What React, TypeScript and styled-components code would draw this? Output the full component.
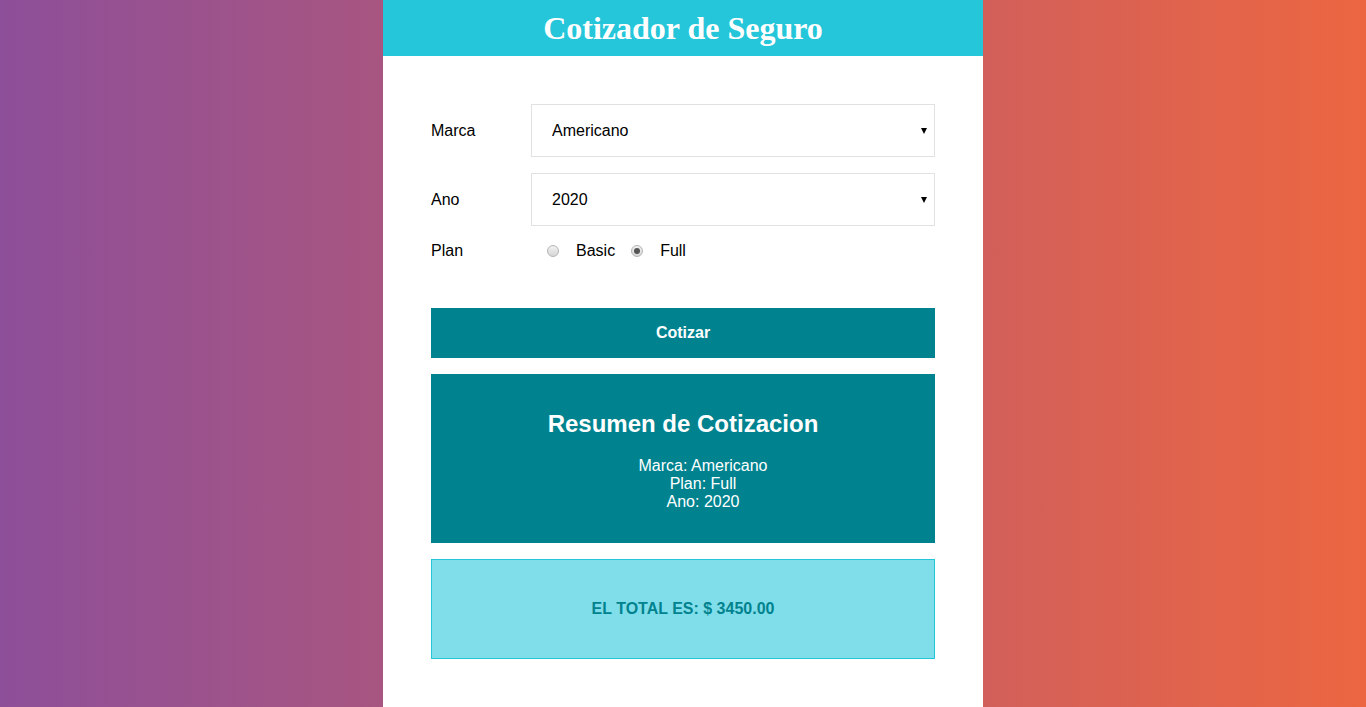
import React, { useState } from "react";
import styled, { createGlobalStyle } from "styled-components";

const GlobalStyle = createGlobalStyle`
  html, body { margin: 0; padding: 0; }
  body {
    min-height: 100vh;
    background: linear-gradient(to right, #8d4f99, #ec6641);
    font-family: "Liberation Sans", Arial, sans-serif;
    color: #000;
  }
  * { box-sizing: border-box; }
`;

const Container = styled.div`
  width: 600px;
  margin: 0 auto;
  background: #fff;
  min-height: 100vh;
`;

const Header = styled.header`
  height: 56px;
  background: #26c6da;
  display: flex;
  align-items: center;
  justify-content: center;
`;

const Title = styled.h1`
  margin: 0;
  font-family: "Liberation Serif", "Times New Roman", serif;
  font-weight: bold;
  font-size: 32px;
  color: #fff;
`;

const Body = styled.div`
  padding: 48px;
`;

const Field = styled.div`
  display: flex;
  align-items: center;
  margin-bottom: 16px;
  font-size: 16px;
`;

const Label = styled.label`
  flex: 0 0 100px;
`;

const SelectWrap = styled.div`
  position: relative;
  flex: 1;
`;

const Select = styled.select`
  display: block;
  width: 100%;
  height: 53px;
  padding: 0 20px;
  border: 1px solid #e1e1e1;
  background: #fff;
  font-family: "Liberation Sans", Arial, sans-serif;
  font-size: 16px;
  color: #000;
  appearance: none;
  -webkit-appearance: none;
  border-radius: 0;
  outline: none;
`;

const Arrow = styled.span`
  position: absolute;
  right: 8px;
  top: 24px;
  width: 0;
  height: 0;
  border-left: 3px solid transparent;
  border-right: 3px solid transparent;
  border-top: 6px solid #000;
  pointer-events: none;
`;

const Radio = styled.input`
  appearance: none;
  -webkit-appearance: none;
  width: 12px;
  height: 12px;
  margin: 0 17px 0 16px;
  border-radius: 50%;
  border: 1px solid #b5b5b5;
  background: linear-gradient(#f2f2f2, #d6d6d6);
  position: relative;
  flex: none;
  &:checked::after {
    content: "";
    position: absolute;
    left: 2px;
    top: 2px;
    width: 6px;
    height: 6px;
    border-radius: 50%;
    background: #555;
  }
`;

const OptionText = styled.span``;

const Button = styled.button`
  display: block;
  width: 100%;
  height: 50px;
  margin-top: 48px;
  border: none;
  background: #00838f;
  color: #fff;
  font-family: "Liberation Sans", Arial, sans-serif;
  font-weight: bold;
  font-size: 16px;
  cursor: pointer;
`;

const Summary = styled.div`
  margin-top: 16px;
  background: #00838f;
  color: #fff;
  text-align: center;
  padding: 16px 16px 16px;
`;

const SummaryTitle = styled.h2`
  font-size: 24px;
  margin: 20px 0 19px;
`;

const List = styled.ul`
  list-style: none;
  margin: 0 0 16px;
  padding: 0 0 0 40px;
  font-size: 16px;
  line-height: 18px;
`;

const Total = styled.div`
  margin-top: 16px;
  height: 100px;
  background: #80deea;
  border: 1px solid #26c6da;
  display: flex;
  align-items: center;
  justify-content: center;
`;

const TotalText = styled.p`
  margin: 0;
  color: #00838f;
  font-weight: bold;
  font-size: 16px;
`;

export default function App() {
  const [marca, setMarca] = useState("americano");
  const [year, setYear] = useState("2020");
  const [plan, setPlan] = useState("completo");

  return (
    <>
      <GlobalStyle />
      <Container>
        <Header>
          <Title>Cotizador de Seguro</Title>
        </Header>
        <Body>
          <Field>
            <Label>Marca</Label>
            <SelectWrap>
              <Select value={marca} onChange={(e) => setMarca(e.target.value)}>
                <option value="">-- Seleccione --</option>
                <option value="americano">Americano</option>
                <option value="europeo">Europeo</option>
                <option value="asiatico">Asiatico</option>
              </Select>
              <Arrow />
            </SelectWrap>
          </Field>
          <Field>
            <Label>Ano</Label>
            <SelectWrap>
              <Select value={year} onChange={(e) => setYear(e.target.value)}>
                <option value="">-- Seleccione --</option>
                <option value="2020">2020</option>
                <option value="2019">2019</option>
                <option value="2018">2018</option>
              </Select>
              <Arrow />
            </SelectWrap>
          </Field>
          <Field>
            <Label>Plan</Label>
            <Radio
              type="radio"
              name="plan"
              value="basico"
              checked={plan === "basico"}
              onChange={() => setPlan("basico")}
            />
            <OptionText>Basic</OptionText>
            <Radio
              type="radio"
              name="plan"
              value="completo"
              checked={plan === "completo"}
              onChange={() => setPlan("completo")}
            />
            <OptionText>Full</OptionText>
          </Field>
          <Button type="button">Cotizar</Button>
          <Summary>
            <SummaryTitle>Resumen de Cotizacion</SummaryTitle>
            <List>
              <li>Marca: Americano</li>
              <li>Plan: Full</li>
              <li>Ano: 2020</li>
            </List>
          </Summary>
          <Total>
            <TotalText>EL TOTAL ES: $ 3450.00</TotalText>
          </Total>
        </Body>
      </Container>
    </>
  );
}
